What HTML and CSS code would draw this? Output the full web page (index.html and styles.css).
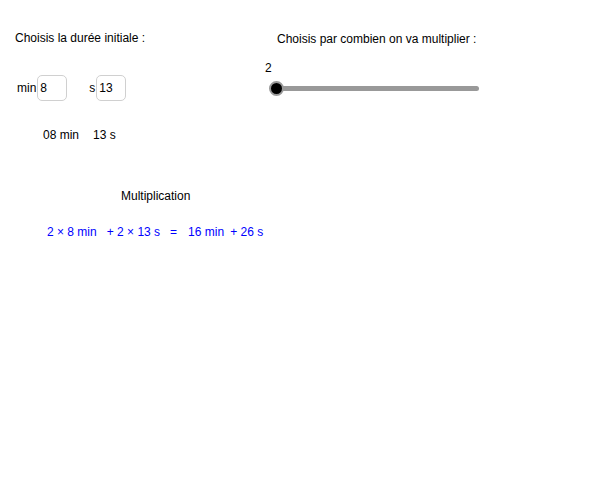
FILE: index.html
```html
<!DOCTYPE html>
<html lang="fr">
<head>
    <meta charset="UTF-8">
    <meta name="viewport" content="width=device-width, initial-scale=1.0">
    <title>Multiplier une durée</title>
    <link rel="stylesheet" href="styles.css">
</head>
<body>
    <div class="applet">
        <div class="haut">
            <!-- durée de départ -->
            <section class="duree">
                <p class="titre">Choisis la durée initiale :</p>
                <div class="saisies">
                    <label class="champ">min <span class="boite">8</span></label>
                    <label class="champ champ-s">s <span class="boite">13</span></label>
                </div>
                <p class="rappel"><span>08 min</span><span class="rappel-s">13 s</span></p>
            </section>

            <!-- curseur du facteur -->
            <section class="facteur">
                <p class="titre">Choisis par combien on va multiplier :</p>
                <div class="curseur">
                    <span class="valeur">2</span>
                    <div class="piste"><span class="bouton"></span></div>
                </div>
            </section>
        </div>

        <p class="operation">Multiplication</p>
        <p class="resultat">
            <span>2 × 8 min</span>
            <span class="r2">+ 2 × 13 s</span>
            <span class="r3">=</span>
            <span class="r4">16 min</span>
            <span class="r5">+ 26 s</span>
        </p>
    </div>
</body>
</html>
```

FILE: styles.css
```css
body {
    margin: 0;
    background-color: #fff;
    font-family: "Liberation Sans", Arial, sans-serif;
    font-size: 12px;
    line-height: 14px;
    color: #000;
}
p {
    margin: 0;
}
.applet {
    width: 600px;
    height: 500px;
    padding-top: 31px;
    box-sizing: border-box;
}
.haut {
    display: grid;
    grid-template-columns: 277px 1fr;
}
.duree {
    padding-left: 15px;
}
.saisies {
    display: flex;
    align-items: center;
    margin-top: 30px;
    padding-left: 2px;
}
.champ {
    display: flex;
    align-items: center;
    gap: 1px;
}
.champ-s {
    margin-left: 22px;
}
.boite {
    width: 30px;
    height: 26px;
    box-sizing: border-box;
    border: 1px solid #d0d0d0;
    border-radius: 5px;
    padding-left: 2px;
    display: flex;
    align-items: center;
    background-color: #fff;
}
.rappel {
    margin-top: 27px;
    padding-left: 28px;
}
.rappel-s {
    margin-left: 14px;
}
.facteur {
    padding-top: 1px;
}
.curseur {
    margin-top: 15px;
    margin-left: -12px;
}
.valeur {
    display: block;
}
.piste {
    position: relative;
    margin-top: 11px;
    margin-left: 12px;
    width: 202px;
    height: 5px;
    border-radius: 3px;
    background-color: #999;
}
/* poignée posée sur la piste */
.bouton {
    position: absolute;
    left: -8px;
    top: -5.5px;
    width: 11px;
    height: 11px;
    border-radius: 50%;
    background-color: #000;
    border: 2.5px solid #9a9a9a;
}
.operation {
    margin-top: 47px;
    padding-left: 121px;
}
.resultat {
    margin-top: 22px;
    padding-left: 47px;
    display: flex;
    color: #0000ff;
}
.r2 { margin-left: 10px; }
.r3 { margin-left: 10px; }
.r4 { margin-left: 11px; }
.r5 { margin-left: 6px; }
```
